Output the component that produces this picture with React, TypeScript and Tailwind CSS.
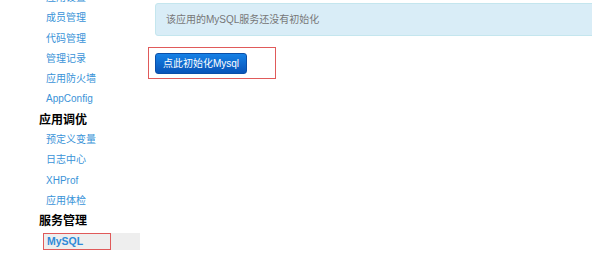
import React from "react";

const font = { fontFamily: '"Liberation Sans", "Noto Sans CJK SC", sans-serif' };

type Row = { t: string; h?: boolean; active?: boolean };
const rows: Row[] = [
  { t: "应用设置" },
  { t: "成员管理" },
  { t: "代码管理" },
  { t: "管理记录" },
  { t: "应用防火墙" },
  { t: "AppConfig" },
  { t: "应用调优", h: true },
  { t: "预定义变量" },
  { t: "日志中心" },
  { t: "XHProf" },
  { t: "应用体检" },
  { t: "服务管理", h: true },
  { t: "MySQL", active: true },
];

export default function App() {
  return (
    <div className="w-[592px] h-[255px] overflow-hidden bg-white flex" style={font}>
      <div className="w-[155px] shrink-0 flex flex-col mt-[-12px]">
        {rows.map((r, i) =>
          r.h ? (
            <div key={i} className="h-[20.3px] leading-[20.3px] pl-[39px] text-[12px] font-bold text-black whitespace-nowrap">
              {r.t}
            </div>
          ) : r.active ? (
            <div key={i} className="h-[20.3px] flex items-center">
              <div className="ml-[43px] w-[97px] h-[17px] bg-[#eeeeee] flex">
                <div className="w-[68px] h-[17px] border border-[#e05a5a] flex items-center pl-[3px] text-[10.5px] font-bold text-[#2f8ad8] whitespace-nowrap">
                  {r.t}
                </div>
              </div>
            </div>
          ) : (
            <div key={i} className="h-[20.3px] leading-[20.3px] pl-[46px] text-[10px] text-[#3a93d8] whitespace-nowrap">
              {r.t}
            </div>
          )
        )}
      </div>
      <div className="flex-1 flex flex-col pt-[3px]">
        <div className="h-[33px] w-[460px] bg-[#d9edf7] border border-[#c4e6ee] rounded-[3px] flex items-center pl-[10px] text-[10px] text-[#777777] whitespace-nowrap">
          该应用的MySQL服务还没有初始化
        </div>
        <div className="mt-[11px] ml-[-7px] w-[128px] h-[32px] border border-[#e05a5a] flex items-center pl-[6px]">
          <div className="w-[92px] h-[21px] rounded-[3px] bg-gradient-to-b from-[#1681e6] to-[#0a54b8] flex items-center justify-center text-[10px] text-white border border-[#0a4fa8] whitespace-nowrap">
            点此初始化Mysql
          </div>
        </div>
      </div>
    </div>
  );
}
